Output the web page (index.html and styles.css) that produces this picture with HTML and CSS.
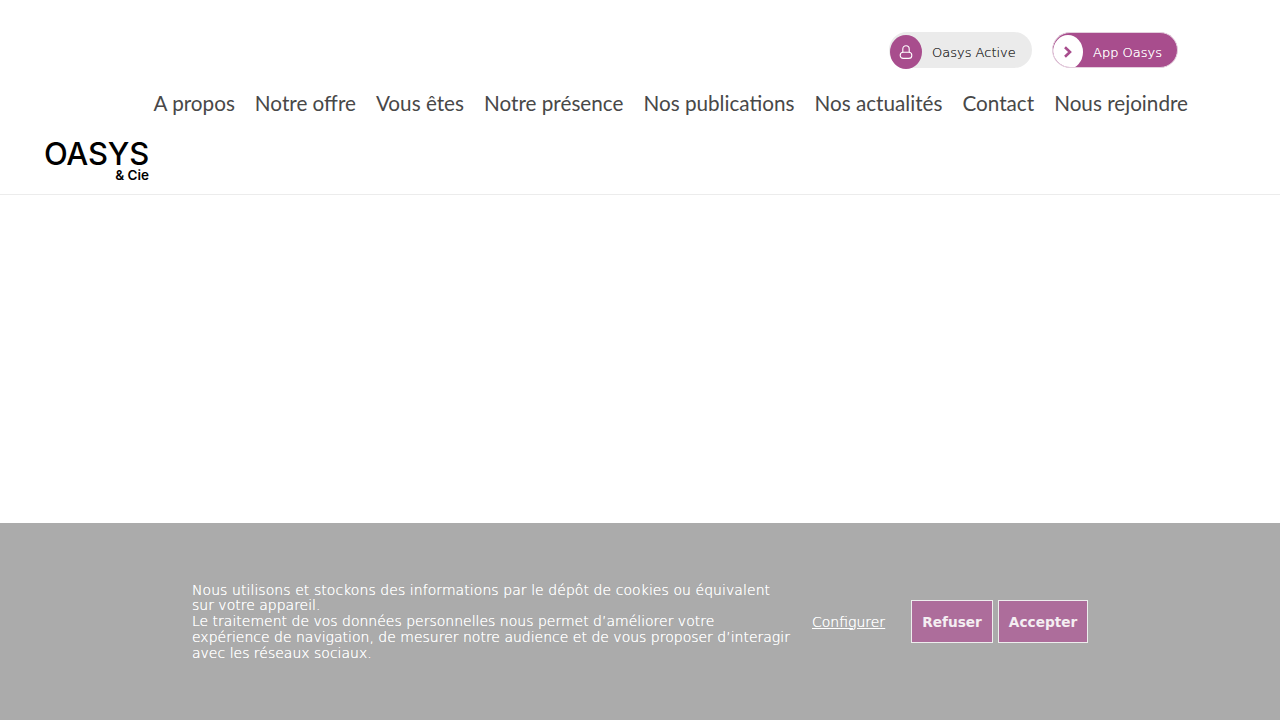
FILE: index.html
```html
<!DOCTYPE html>
<html lang="fr">
<head>
<meta charset="utf-8">
<title>Oasys &amp; Cie</title>
<link rel="stylesheet" href="styles.css">
</head>
<body>
<header class="header">
  <div class="top-links">
    <a class="pill pill-active" href="#">
      <span class="pill-icon">
        <svg width="14" height="14" viewBox="0 0 14 14" fill="none" stroke="#fff" stroke-width="1.1"><path d="M3.8 7.2V4a3.2 3.2 0 0 1 6.4 0v3.2"/><rect x="1.2" y="7.2" width="11.6" height="6.2" rx="3"/></svg>
      </span>
      <span class="pill-label">Oasys Active</span>
    </a>
    <a class="pill pill-app" href="#">
      <span class="pill-chevron">
        <svg width="10" height="12" viewBox="0 0 10 12" fill="none" stroke="#a84d8d" stroke-width="2.6"><path d="M2 1.2 7 6 2 10.8"/></svg>
      </span>
      <span class="pill-label">App Oasys</span>
    </a>
  </div>
  <nav class="nav">
    <a href="#">A propos</a>
    <a href="#">Notre offre</a>
    <a href="#">Vous êtes</a>
    <a href="#">Notre présence</a>
    <a href="#">Nos publications</a>
    <a href="#">Nos actualités</a>
    <a href="#">Contact</a>
    <a href="#">Nous rejoindre</a>
  </nav>
  <a class="logo" href="#">
    <span class="logo-main">OASYS</span>
    <span class="logo-sub">&amp; Cie</span>
  </a>
</header>
<aside class="cookies">
  <p class="cookies-text"><span class="cookies-first">Nous utilisons et stockons des informations par le dépôt de cookies ou équivalent</span><br>sur votre appareil.<br>Le traitement de vos données personnelles nous permet d’améliorer votre expérience de navigation, de mesurer notre audience et de vous proposer d’interagir avec les réseaux sociaux.</p>
  <a class="cookies-config" href="#">Configurer</a>
  <button class="cookies-btn cookies-refuse">Refuser</button>
  <button class="cookies-btn cookies-accept">Accepter</button>
</aside>
</body>
</html>
```
FILE: styles.css
```css
* { box-sizing: border-box; }
html, body { margin: 0; height: 100%; background: #fff; overflow: hidden; }
a { text-decoration: none; color: inherit; }

.header {
  height: 195px;
  border-bottom: 1px solid #ececec;
  padding: 32px 92px 0 45px;
  display: flex;
  flex-direction: column;
}
.top-links {
  display: flex;
  justify-content: flex-end;
  gap: 20px;
  padding-right: 10px;
  height: 37px;
  font-family: "DejaVu Sans", sans-serif;
  font-weight: 200;
  font-size: 13px;
  text-shadow: 0 0 0 currentColor;
}
.pill {
  display: flex;
  align-items: center;
  height: 36px;
  border-radius: 18px;
}
.pill-active { width: 143px; background: #ebebeb; color: #333; }
.pill-active .pill-label { margin: 4px 0 0 10px; }
.pill-icon {
  width: 32px; height: 34px;
  margin: 4px 0 0 1px;
  border-radius: 50%;
  background: #a84d8d;
  display: flex; align-items: center; justify-content: center;
}
.pill-app { width: 126px; background: #a84d8d; color: #fff; overflow: hidden; border: 1px solid #e4d0de; }
.pill-app .pill-label { margin: 4px 0 0 10px; }
.pill-chevron {
  width: 30px; height: 34px;
  margin: 4px 0 0 0;
  border-radius: 50%;
  background: #fff;
  display: flex; align-items: center; justify-content: center;
}
.nav {
  display: flex;
  justify-content: flex-end;
  gap: 20px;
  margin-top: 22px;
  font-family: Lato, sans-serif;
  font-size: 20.7px;
  line-height: 24px;
  color: #484848;
}
.logo {
  display: flex;
  flex-direction: column;
  align-items: flex-end;
  width: 104px;
  margin-top: 25px;
  color: #000;
  font-family: Inter, sans-serif;
}
.logo-main { font-size: 31px; line-height: 27px; font-weight: 500; letter-spacing: -.2px; }
.logo-sub { font-size: 13.5px; line-height: 17px; font-weight: 600; }

.cookies {
  position: fixed;
  left: 0; right: 0; bottom: 0;
  height: 197px;
  background: #ababab;
  display: flex;
  align-items: center;
  padding-left: 192px;
  color: #fff;
  font-family: "DejaVu Sans", sans-serif;
  font-weight: 200;
  font-size: 14px;
  text-shadow: 0 0 0 currentColor;
}
.cookies-text { margin: 1px 0 0; width: 600px; line-height: 15.7px; }
.cookies-first { letter-spacing: .065px; }
.cookies-config { margin-left: 20px; text-decoration: underline; }
.cookies-btn {
  height: 43px;
  padding: 0 10px;
  background: #ad6d9b;
  border: 1px solid #eee;
  color: #f4eef2;
  font: bold 13.7px "DejaVu Sans", sans-serif;
  text-shadow: none;
}
.cookies-refuse { margin-left: 26px; }
.cookies-accept { margin-left: 5px; }
```
